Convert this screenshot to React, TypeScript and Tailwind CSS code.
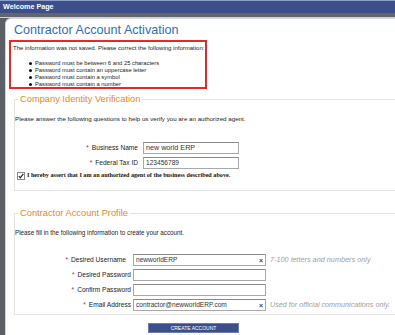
import type { ReactNode } from "react"

const SANS = { fontFamily: '"Liberation Sans", Arial, sans-serif' }

function Req() {
  return <span className="text-[#c0262b] mr-[3px]">*</span>
}

function Field({
  value,
  clear,
  className,
}: {
  value?: string
  clear?: boolean
  className: string
}) {
  return (
    <div
      className={
        "flex h-[12px] items-center justify-between border border-[#a8a8a8] border-t-[#8a8a8a] bg-white pl-[2px] pr-[2px] text-[#333] " +
        className
      }
    >
      <span className="leading-none">{value}</span>
      {clear && <span className="text-[7px] font-bold leading-none text-[#444]">×</span>}
    </div>
  )
}

function Legend({ children }: { children: ReactNode }) {
  return (
    <legend className="ml-[3px] px-[2px] text-[9.3px] leading-[12px] text-[#e8862a]">
      {children}
    </legend>
  )
}

export default function App() {
  const errors = [
    "Password must be between 6 and 25 characters",
    "Password must contain an uppercase letter",
    "Password must contain a symbol",
    "Password must contain a number",
  ]

  return (
    <div className="h-[335px] w-[395px] overflow-hidden bg-[#5b6066]" style={SANS}>
      <div className="box-border flex h-[13px] items-center border-t border-[#8f9fcb] bg-[#3d4f8a] pl-[3px] text-[7.2px] font-bold text-white">
        Welcome Page
      </div>
      <div className="h-[4px] bg-[#62666b]" />
      <div className="h-[1px] bg-[#cfd2d6]" />

      <div className="flex">
        <div className="w-[5px] shrink-0" />
        <div className="h-[320px] flex-1 overflow-hidden rounded-tl-[6px] border-l border-t border-[#d4d6d9] bg-white pl-[3px] pt-[3px]">
          <h1 className="ml-[5px] text-[12.6px] leading-[16px] text-[#2e6db4]">
            Contractor Account Activation
          </h1>

          <div className="mt-[2px] box-border h-[49px] w-[198px] border-2 border-[#e8262b] pl-[2px] pt-[3px] text-[6px] leading-[7px] text-[#222]">
            <div>The information was not saved. Please correct the following information:</div>
            <ul className="mt-[8px]">
              {errors.map((e) => (
                <li key={e} className="flex items-center text-[5.8px]">
                  <span className="ml-[16px] h-[3px] w-[3px] rounded-full bg-[#111]" />
                  <span className="ml-[3px]">{e}</span>
                </li>
              ))}
            </ul>
          </div>

          <fieldset className="mt-[4px] ml-[5px] w-[420px] border border-[#e4e4e4] pb-[9px]">
            <Legend>Company Identity Verification</Legend>
            <p className="mt-[10px] text-[6.2px] leading-[8px] text-[#222]">
              Please answer the following questions to help us verify you are an authorized agent.
            </p>
            <div className="mt-[19px] flex items-center">
              <div className="w-[123px] text-right text-[6.6px] text-[#222]">
                <Req />Business Name
              </div>
              <Field value="new world ERP" className="ml-[5px] w-[96px] text-[7.2px]" />
            </div>
            <div className="mt-[3px] flex items-center">
              <div className="w-[123px] text-right text-[6.6px] text-[#222]">
                <Req />Federal Tax ID
              </div>
              <Field value="123456789" className="ml-[5px] w-[96px] text-[6.6px]" />
            </div>
            <div className="mt-[2px] flex h-[10px] items-center">
              <svg width="8" height="8" viewBox="0 0 8 8" className="ml-[2px]">
                <rect x="0.5" y="0.5" width="7" height="7" fill="#fff" stroke="#8a8a8a" />
                <path d="M1.8 4.1 L3.3 5.8 L6.3 1.9" fill="none" stroke="#222" strokeWidth="1.2" />
              </svg>
              <span
                className="ml-[2px] text-[6.15px] font-bold text-[#111]"
                style={{ fontFamily: '"Liberation Serif", "Times New Roman", serif' }}
              >
                I hereby assert that I am an authorized agent of the business described above.
              </span>
            </div>
          </fieldset>

          <fieldset className="mt-[16px] ml-[5px] w-[420px] border border-[#e4e4e4] pb-[3px]">
            <Legend>Contractor Account Profile</Legend>
            <p className="mt-[10px] text-[6.3px] leading-[8px] text-[#222]">
              Please fill in the following information to create your account.
            </p>
            <div className="mt-[17px] flex items-center">
              <div className="w-[116px] pr-[5px] text-right text-[6.6px] text-[#222]">
                <Req />Desired Username
              </div>
              <Field value="newworldERP" clear className="ml-[2px] w-[133px] text-[6.6px]" />
              <span className="ml-[4px] text-[7.3px] italic text-[#a0a0a0]">
                7-100 letters and numbers only
              </span>
            </div>
            <div className="mt-[3px] flex items-center">
              <div className="w-[116px] text-right text-[6.6px] text-[#222]">
                <Req />Desired Password
              </div>
              <Field className="ml-[2px] w-[133px]" />
            </div>
            <div className="mt-[3px] flex items-center">
              <div className="w-[116px] text-right text-[6.6px] text-[#222]">
                <Req />Confirm Password
              </div>
              <Field className="ml-[2px] w-[133px]" />
            </div>
            <div className="mt-[3px] flex items-center">
              <div className="w-[116px] text-right text-[6.6px] text-[#222]">
                <Req />Email Address
              </div>
              <Field value="contractor@newworldERP.com" clear className="ml-[2px] w-[133px] text-[6.6px]" />
              <span className="ml-[4px] text-[7.2px] italic text-[#a0a0a0]">
                Used for official communications only.
              </span>
            </div>
          </fieldset>

          <button className="mt-[8px] ml-[139px] flex h-[10px] w-[91px] items-center justify-center border border-[#6c7cb0] bg-[#3d4f8a] text-[5px] leading-none text-white">
            CREATE ACCOUNT
          </button>
        </div>
      </div>
    </div>
  )
}
